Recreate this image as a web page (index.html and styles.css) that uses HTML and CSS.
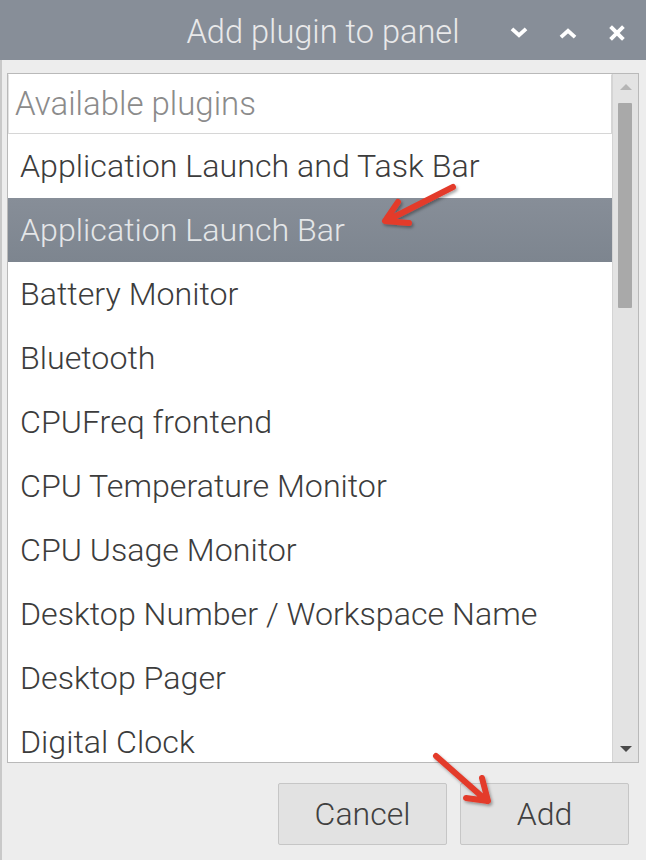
FILE: index.html
```html
<!DOCTYPE html>
<html>
<head>
<meta charset="utf-8">
<link rel="stylesheet" href="styles.css">
</head>
<body>
<div class="window">
  <header class="titlebar">
    <span class="spacer"></span>
    <span class="title">Add plugin to panel</span>
    <span class="controls">
      <svg class="ctl" viewBox="0 0 16 16"><path d="M3 5.5 L8 10 L13 5.5" /></svg>
      <svg class="ctl" viewBox="0 0 16 16"><path d="M3 10.5 L8 6 L13 10.5" /></svg>
      <svg class="ctl" viewBox="0 0 16 16"><path d="M3.5 3.5 L12.5 12.5 M12.5 3.5 L3.5 12.5" /></svg>
    </span>
  </header>
  <main class="content">
    <div class="listframe">
      <div class="list">
        <div class="listhead">Available plugins</div>
        <div class="rows">
          <div class="row">Application Launch and Task Bar</div>
          <div class="row selected">Application Launch Bar</div>
          <div class="row">Battery Monitor</div>
          <div class="row">Bluetooth</div>
          <div class="row">CPUFreq frontend</div>
          <div class="row">CPU Temperature Monitor</div>
          <div class="row">CPU Usage Monitor</div>
          <div class="row">Desktop Number / Workspace Name</div>
          <div class="row">Desktop Pager</div>
          <div class="row">Digital Clock</div>
        </div>
      </div>
      <div class="scrollbar">
        <span class="arrow up"></span>
        <div class="track"><div class="thumb"></div></div>
        <span class="arrow down"></span>
      </div>
    </div>
    <div class="buttons">
      <button class="btn">Cancel</button>
      <button class="btn">Add</button>
    </div>
  </main>
  <svg class="annotations" viewBox="0 0 646 860" width="646" height="860">
    <defs>
      <filter id="sh" x="-20%" y="-20%" width="140%" height="140%">
        <feDropShadow dx="1.5" dy="2" stdDeviation="1.5" flood-color="#000" flood-opacity="0.35"/>
      </filter>
    </defs>
    <g filter="url(#sh)" fill="none" stroke="#e33a2c" stroke-width="6" stroke-linecap="round" stroke-linejoin="round">
      <path d="M453 187 L386 221 M398 202 L385 221 L409 223"/>
      <path d="M436 756 L487 801 M482 778 L488 801 L466 798"/>
    </g>
  </svg>
</div>
</body>
</html>
```
FILE: styles.css
```css
* { box-sizing: border-box; }
html, body { margin: 0; padding: 0; }
body {
  width: 646px;
  height: 860px;
  overflow: hidden;
  background: #ededed;
  font-family: Roboto, "Noto Sans", sans-serif;
  font-weight: 300;
}
.window {
  position: relative;
  width: 646px;
  height: 860px;
  display: flex;
  flex-direction: column;
  border-left: 2px solid #c9c9c9;
}
.titlebar {
  height: 60px;
  flex: none;
  background: #878e98;
  display: grid;
  grid-template-columns: 1fr auto 1fr;
  align-items: center;
  margin-left: -2px;
}
.title {
  color: #e9e9ea;
  font-size: 32.6px;
  transform: translateY(2px);
}
.controls {
  display: flex;
  justify-content: flex-end;
  align-items: center;
  gap: 31px;
  padding-right: 20px;
  transform: translateY(3px);
}
.ctl {
  width: 18px;
  height: 18px;
  fill: none;
  stroke: #fff;
  stroke-width: 3.4;
  stroke-linecap: square;
}
.content {
  flex: 1;
  display: flex;
  flex-direction: column;
  padding: 13px 7px 0 5px;
}
.listframe {
  height: 690px;
  border: 1px solid #b9b9b9;
  display: flex;
  background: #fff;
}
.list {
  flex: 1;
  display: flex;
  flex-direction: column;
  overflow: hidden;
}
.listhead {
  height: 60px;
  flex: none;
  border: 1px solid #d6d6d6;
  border-top-color: #fff;
  border-left-color: #e2e2e2;
  display: flex;
  align-items: center;
  padding-left: 6px;
  font-size: 33px;
  color: #8b8b8b;
  padding-bottom: 2px;
  white-space: nowrap;
}
.rows { display: flex; flex-direction: column; }
.row {
  height: 64px;
  flex: none;
  display: flex;
  align-items: center;
  padding-left: 12px;
  font-size: 32.2px;
  color: #3c3c3c;
  white-space: nowrap;
}
.row.selected {
  background: linear-gradient(#878e98, #7d858f);
  color: #e4e6e8;
}
.scrollbar {
  width: 26px;
  flex: none;
  background: #e3e3e3;
  border-left: 1px solid #d4d4d4;
  display: flex;
  flex-direction: column;
  align-items: center;
  padding: 8px 0 6px;
}
.arrow {
  width: 0; height: 0;
  border-left: 6px solid transparent;
  border-right: 6px solid transparent;
}
.arrow.up { border-bottom: 6px solid #b5b5b5; margin-top: 2px; }
.arrow.down { border-top: 6px solid #4a4a4a; margin-bottom: 4px; }
.track {
  flex: 1;
  width: 100%;
  padding: 13px 5px 0 5px;
}
.thumb {
  width: 14px;
  height: 205px;
  background: #a9a9a9;
  border-radius: 1px;
}
.buttons {
  display: flex;
  justify-content: flex-end;
  gap: 13px;
  padding: 20px 10px 0 0;
}
.btn {
  width: 169px;
  height: 62px;
  background: #e2e2e2;
  border: 1px solid #c6c6c6;
  border-radius: 2px;
  font-family: Roboto, "Noto Sans", sans-serif;
  font-weight: 300;
  font-size: 32px;
  color: #404040;
  padding: 0;
}
.annotations {
  position: absolute;
  left: -2px;
  top: 0;
  pointer-events: none;
}
```
